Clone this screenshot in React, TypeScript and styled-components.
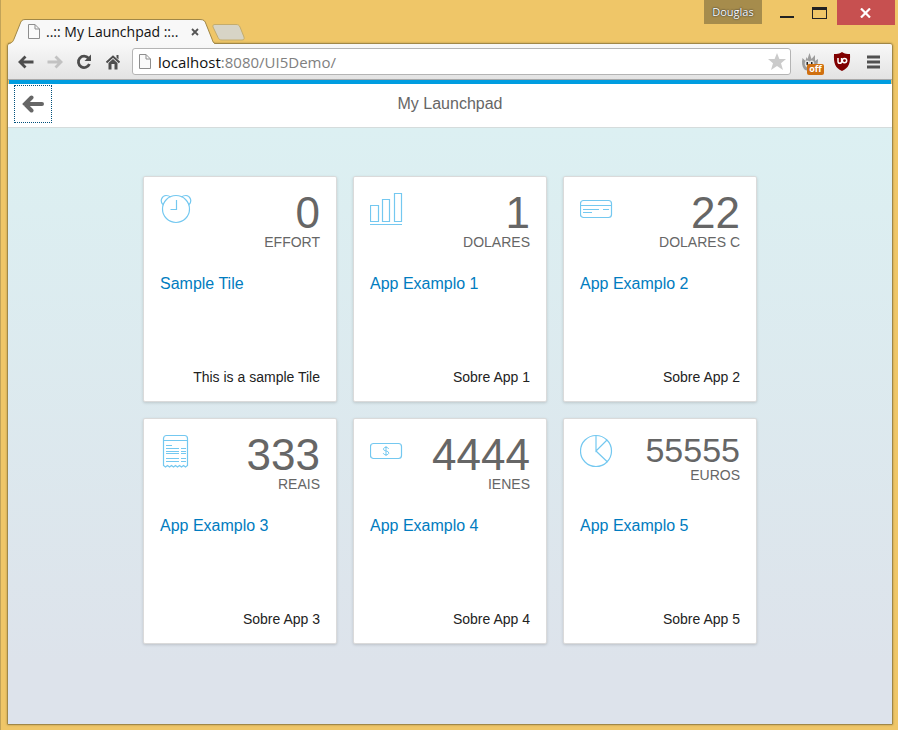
import React from "react";
import styled, { createGlobalStyle, css } from "styled-components";

const GlobalStyle = createGlobalStyle`
  * { box-sizing: border-box; }
  body { margin: 0; background: #efc668; font-family: "Liberation Sans", Arial, sans-serif; }
  button, input { font: inherit; }
  svg { display: block; flex: none; }
`;

const Desktop = styled.div`
  min-height: 100vh;
  display: flex;
  flex-direction: column;
  padding: 0 5px 5px 6px;
  border-left: 1px solid #c2a358;
  background: #efc668;
`;

const TitleBar = styled.header`
  display: flex;
  justify-content: space-between;
  height: 43px;
  margin-right: -2px;
`;

const TabStrip = styled.div`
  display: flex;
  align-items: flex-end;
`;

const Tab = styled.div`
  position: relative;
  z-index: 1;
  display: flex;
  align-items: center;
  width: 208px;
  height: 25px;
  margin-bottom: -1px;
  padding: 0 16px 0 21px;
`;

const TabShape = styled.svg`
  position: absolute;
  inset: 0;
`;

const TabTitle = styled.span`
  position: relative;
  flex: 1;
  margin-left: 6px;
  font: 14px/20px "Open Sans", "Noto Sans", sans-serif;
  color: #111;
  white-space: nowrap;
`;

const PlainButton = styled.button`
  position: relative;
  display: flex;
  align-items: center;
  justify-content: center;
  flex: none;
  padding: 0;
  border: 0;
  background: none;
  cursor: pointer;
`;

const NewTabButton = styled(PlainButton)`
  margin: 0 0 2px -3px;
`;

const WindowControls = styled.div`
  display: flex;
  align-items: flex-start;
`;

const ProfileButton = styled(PlainButton)`
  height: 24px;
  width: 58px;
  background: #a68c4c;
  color: #fff;
  font: 11px/24px "Open Sans", "Noto Sans", sans-serif;
  text-shadow: 0 0 2px #333, 0 0 1px #333;
`;

const CaptionButton = styled(PlainButton)<{ $wide?: boolean }>`
  width: ${(p) => (p.$wide ? 58 : 33)}px;
  height: 25px;
  ${(p) => p.$wide && css`background: #c75050;`}
`;

const CaptionGroup = styled.div`
  display: flex;
  margin: 0 1px 0 8px;
`;

const BrowserWindow = styled.div`
  flex: 1;
  display: flex;
  flex-direction: column;
  border: 1px solid #a08747;
  border-radius: 3px 3px 1px 1px;
  box-shadow: 0 0 2px #a08747;
  overflow: hidden;
`;

const Toolbar = styled.nav`
  display: flex;
  align-items: center;
  height: 36px;
  padding: 0 10px 0 9px;
  background: linear-gradient(#f8f8f8, #e3e3e3);
  border-bottom: 1px solid #a9a9a9;
`;

const NavButtons = styled.div`
  display: flex;
  gap: 11px;
`;

const AddressBar = styled.div`
  flex: 1;
  display: flex;
  align-items: center;
  gap: 7px;
  height: 27px;
  margin: 0 9px 0 10px;
  padding: 0 4px 0 6px;
  border: 1px solid #b4b4b4;
  border-radius: 3px;
  background: #fff;
`;

const Address = styled.div`
  flex: 1;
  font: 15px/24px "Open Sans", "Noto Sans", sans-serif;
  color: #808080;
`;

const Host = styled.span`
  color: #111;
`;

const Extensions = styled.div`
  display: flex;
  align-items: center;
  gap: 13px;
`;

const OffBadge = styled.span`
  position: absolute;
  right: -4px;
  bottom: -3px;
  width: 17px;
  height: 11px;
  border-radius: 2px;
  background: #d07010;
  color: #fff;
  font: bold 9px/10px "Open Sans", sans-serif;
  text-align: center;
`;

const ShellAccent = styled.div`
  height: 4px;
  margin: 0 1px;
  background: #009de0;
`;

const ShellHeader = styled.header`
  display: grid;
  grid-template-columns: 1fr auto 1fr;
  align-items: center;
  height: 44px;
  padding: 0 6px 4px;
  border-bottom: 1px solid #d5dcdc;
  background: #fff;
`;

const ShellTitle = styled.h1`
  margin: 0;
  font-size: 16px;
  line-height: 20px;
  font-weight: normal;
  color: #666;
`;

const BackButton = styled(PlainButton)`
  width: 38px;
  height: 38px;
  border: 1px dotted #00507c;
`;

const Launchpad = styled.main`
  flex: 1;
  display: flex;
  justify-content: center;
  align-items: flex-start;
  padding: 48px 16px;
  background: linear-gradient(#dcf0f2, #dde3eb 90%);
`;

const TileGrid = styled.div`
  display: grid;
  grid-template-columns: repeat(3, 194px);
  gap: 16px;
`;

const TileLink = styled.a`
  display: flex;
  flex-direction: column;
  min-height: 226px;
  padding: 15px 16px;
  border: 1px solid #dadada;
  border-radius: 2px;
  background: #fff;
  box-shadow: 0 1px 3px rgba(0, 0, 0, 0.15);
  text-decoration: none;
`;

const TileTop = styled.div`
  display: flex;
  justify-content: space-between;
  height: 80px;
`;

const Measure = styled.div`
  text-align: right;
  color: #666;
`;

const Figure = styled.div<{ $small?: boolean }>`
  font-family: "Liberation Sans Narrow", "Arial Narrow", "Liberation Sans", sans-serif;
  font-size: ${(p) => (p.$small ? 34 : 44)}px;
  line-height: ${(p) => (p.$small ? 33 : 42)}px;
`;

const Unit = styled.div`
  font-size: 14px;
  line-height: 16px;
`;

const TileTitle = styled.h2`
  margin: 0;
  font-size: 16px;
  line-height: 24px;
  font-weight: normal;
  color: #007cc0;
`;

const Info = styled.div`
  margin-top: auto;
  font-size: 14px;
  line-height: 18px;
  text-align: right;
  color: #222;
`;

const TileSvg = ({ children }: { children: React.ReactNode }) => (
  <svg width="33" height="34" viewBox="0 0 33 34" fill="none" stroke="#74c8f0" strokeWidth="1.2" aria-hidden="true">
    {children}
  </svg>
);

const icons = {
  clock: (
    <TileSvg>
      <circle cx="16" cy="17" r="13.5" />
      <path d="M16.5 8v9.500h-6M2.800 12.500C-.5 9 2 3.500 6 3.500c2 0 3.500.600 4.500 1.500M29.200 12.500C32.500 9 30 3.500 26 3.500c-2 0-3.500.600-4.500 1.500" />
    </TileSvg>
  ),
  bars: (
    <TileSvg>
      <path d="M.5 13.500h8v16h-8zM12.500 7.500h7v22h-7zM24.500 1.500h7v28h-7zM0 32.500h32" />
    </TileSvg>
  ),
  card: (
    <TileSvg>
      <rect x=".5" y="8.500" width="31" height="17" rx="3" />
      <path d="M.5 13.500h31M3 17.500h16M23 17.500h6M3 20.500h9" />
    </TileSvg>
  ),
  receipt: (
    <TileSvg>
      <path d="M3.500 6.500V4.500a3 3 0 0 1 3-3h18a3 3 0 0 1 3 3v2M3.500 6.500h24M3.500 6.500v25l2 1.500 2-1.500 2 1.500 2-1.500 2 1.500 2-1.500 2 1.500 2-1.500 2 1.500 2-1.500 2 1.500 2-1.500V6.500" />
      <path d="M6 11.500h6M6 14.500h13M21 14.500h5M6 17.500h13M21 17.500h5M6 19.500h13M21 19.500h5M6 24.500h13M21 24.500h5M6 27.500h13M21 27.500h5" />
    </TileSvg>
  ),
  money: (
    <TileSvg>
      <rect x=".5" y="9.500" width="31" height="15" rx="3" />
      <path d="M18.700 15c-.3-1-1.300-1.600-2.700-1.600s-2.600.6-2.600 1.700c0 2.500 5.400 1.200 5.400 3.900 0 1.100-1.200 1.800-2.700 1.800s-2.700-.7-2.900-1.800M16 12v10" strokeWidth="1" />
    </TileSvg>
  ),
  pie: (
    <TileSvg>
      <circle cx="16" cy="17" r="15.500" />
      <path d="M16 1.500V17L27 6M16 17l11.500 11" />
    </TileSvg>
  ),
};

type TileData = { icon: keyof typeof icons; value: string; unit: string; title: string; info: string };

const tiles: TileData[] = [
  { icon: "clock", value: "0", unit: "EFFORT", title: "Sample Tile", info: "This is a sample Tile" },
  { icon: "bars", value: "1", unit: "DOLARES", title: "App Examplo 1", info: "Sobre App 1" },
  { icon: "card", value: "22", unit: "DOLARES C", title: "App Examplo 2", info: "Sobre App 2" },
  { icon: "receipt", value: "333", unit: "REAIS", title: "App Examplo 3", info: "Sobre App 3" },
  { icon: "money", value: "4444", unit: "IENES", title: "App Examplo 4", info: "Sobre App 4" },
  { icon: "pie", value: "55555", unit: "EUROS", title: "App Examplo 5", info: "Sobre App 5" },
];

const Tile = ({ icon, value, unit, title, info }: TileData) => (
  <TileLink href="#">
    <TileTop>
      {icons[icon]}
      <Measure>
        <Figure $small={value.length > 4}>{value}</Figure>
        <Unit>{unit}</Unit>
      </Measure>
    </TileTop>
    <TileTitle>{title}</TileTitle>
    <Info>{info}</Info>
  </TileLink>
);

const PageSvg = styled.svg`
  position: relative;
`;

const PageIcon = () => (
  <PageSvg width="12" height="15" viewBox="0 0 12 15" fill="#fafafa" stroke="#8e8e8e" aria-hidden="true">
    <path d="M.5.5h6.500l4.500 4.500v9.500H.5zM7 .5V5h4.500" />
  </PageSvg>
);

const Arrow = ({ color, flip }: { color: string; flip?: boolean }) => (
  <svg width="18" height="18" viewBox="0 0 18 18" fill="none" stroke={color} strokeWidth="2.800" aria-hidden="true">
    <path d={flip ? "M1.500 9h13M9.500 3.500 15 9l-5.500 5.500" : "M16.500 9h-13M8.500 3.500 3 9l5.500 5.500"} />
  </svg>
);

export default function App() {
  return (
    <>
      <GlobalStyle />
      <Desktop>
        <TitleBar>
          <TabStrip>
            <Tab>
              <TabShape width="208" height="25" viewBox="0 0 208 25" aria-hidden="true">
                <path d="M2 25c3-1 4-2 5-5l6-15c1-3 2-4.500 5-4.500h175c4 0 5 1.500 6 4.500l6 15c1 3 1.500 4 3 5z" fill="#f8f8f8" />
                <path d="M1 24.500c4-.5 5-2 6-4.500l6-15c1-3 2-4.500 5-4.500h175c4 0 5 1.500 6 4.500l6 15c1 3 1.500 4 3 4.500" fill="none" stroke="#a08747" />
              </TabShape>
              <PageIcon />
              <TabTitle>..:: My Launchpad ::..</TabTitle>
              <PlainButton aria-label="Close tab">
                <svg width="8" height="8" viewBox="0 0 8 8" stroke="#555" strokeWidth="1.800" aria-hidden="true">
                  <path d="m1 1 6 6M7 1 1 7" />
                </svg>
              </PlainButton>
            </Tab>
            <NewTabButton aria-label="New tab">
              <svg width="33" height="17" viewBox="0 0 33 17" aria-hidden="true">
                <path d="M3 .5h21c2 0 3 .5 4 2.500l4 10c.5 2 0 3-2 3H10c-2 0-3-.5-4-2.500L1 3C.5 1.500 1 .5 3 .5z" fill="#d7d4c6" stroke="#c4ac6c" />
              </svg>
            </NewTabButton>
          </TabStrip>
          <WindowControls>
            <ProfileButton>Douglas</ProfileButton>
            <CaptionGroup>
              <CaptionButton aria-label="Minimize">
                <svg width="14" height="14" viewBox="0 0 14 14" aria-hidden="true"><path d="M0 10h14v2H0z" fill="#222" /></svg>
              </CaptionButton>
              <CaptionButton aria-label="Maximize">
                <svg width="15" height="12" viewBox="0 0 15 12" aria-hidden="true"><path d="M0 0h15v12H0zM1 3v8h13V3z" fillRule="evenodd" fill="#222" /></svg>
              </CaptionButton>
            </CaptionGroup>
            <CaptionButton $wide aria-label="Close">
              <svg width="12" height="10" viewBox="0 0 12 10" stroke="#fff" strokeWidth="2.200" aria-hidden="true"><path d="m1 .5 9 9M10 .5l-9 9" /></svg>
            </CaptionButton>
          </WindowControls>
        </TitleBar>

        <BrowserWindow>
          <Toolbar>
            <NavButtons>
              <PlainButton aria-label="Back"><Arrow color="#4d4d4d" /></PlainButton>
              <PlainButton aria-label="Forward"><Arrow color="#c2c2c2" flip /></PlainButton>
              <PlainButton aria-label="Reload">
                <svg width="18" height="18" viewBox="0 0 18 18" aria-hidden="true">
                  <path d="M13.500 5.200A5.700 5.700 0 1 0 14.400 11" fill="none" stroke="#4d4d4d" strokeWidth="2.800" />
                  <path d="M16 1.500V8H9.500z" fill="#4d4d4d" />
                </svg>
              </PlainButton>
              <PlainButton aria-label="Home">
                <svg width="18" height="18" viewBox="0 0 18 18" aria-hidden="true">
                  <path d="m2.500 9.500 6.500-6 6.500 6" fill="none" stroke="#4d4d4d" strokeWidth="2" />
                  <path d="M12.500 2h2v4.500l-2-2zM4.500 10 9 6l4.500 4v6.500h-3V11h-3v5.500h-3z" fill="#4d4d4d" />
                </svg>
              </PlainButton>
            </NavButtons>
            <AddressBar>
              <PageIcon />
              <Address><Host>localhost</Host>:8080/UI5Demo/</Address>
              <PlainButton aria-label="Bookmark this page">
                <svg width="18" height="17" viewBox="0 0 18 17" aria-hidden="true"><path d="m9 0 2.400 6H18l-5 4.300 2 6.700-6-4-6 4 2-6.700L0 6h6.600z" fill="#cbcbcb" /></svg>
              </PlainButton>
            </AddressBar>
            <Extensions>
              <PlainButton aria-label="Extension off">
                <svg width="20" height="20" viewBox="0 0 20 20" aria-hidden="true">
                  <path d="M4 17C2 14 1.500 11 2.500 6l3 3 1-4 1 2L9.500 1l2 6 3.500-4v6l3-2c0 5-1 8-4 10-4 2-8 2-10 0z" fill="#9c9c9c" />
                  <path d="M5 10c1-2 3-2 4.500-.5C11 8 13 8 14 10c1 3-1 6-4.500 6S4 13 5 10z" fill="#e4e4e4" />
                  <path d="M6.500 10H8v3H6.500zM11 10h1.500v3H11z" fill="#222" />
                </svg>
                <OffBadge>off</OffBadge>
              </PlainButton>
              <PlainButton aria-label="uBlock">
                <svg width="18" height="19" viewBox="0 0 18 19" aria-hidden="true">
                  <path d="M9 0c3 2 5 2 8 2 .5 9-1 14-8 17C2 16 .5 11 1 2c3 0 5 0 8-2z" fill="#800000" />
                  <path d="M5 6v3.500a1.800 1.800 0 0 0 3.600 0V6" fill="none" stroke="#fff" strokeWidth="1.500" />
                  <circle cx="11.500" cy="8.600" r="2.200" fill="none" stroke="#fff" strokeWidth="1.500" />
                </svg>
              </PlainButton>
              <PlainButton aria-label="Menu">
                <svg width="18" height="14" viewBox="0 0 18 14" aria-hidden="true"><path d="M3 2h13M3 7h13M3 12h13" stroke="#505050" strokeWidth="2.800" /></svg>
              </PlainButton>
            </Extensions>
          </Toolbar>
          <ShellAccent />
          <ShellHeader>
            <BackButton aria-label="Back to previous page">
              <svg width="22" height="18" viewBox="0 0 22 18" fill="none" stroke="#666" strokeWidth="4" aria-hidden="true">
                <path d="M3 9h17M9.500 2.500 3 9l6.500 6.500" strokeLinecap="round" />
              </svg>
            </BackButton>
            <ShellTitle>My Launchpad</ShellTitle>
          </ShellHeader>
          <Launchpad>
            <TileGrid>
              {tiles.map((tile) => <Tile key={tile.title} {...tile} />)}
            </TileGrid>
          </Launchpad>
        </BrowserWindow>
      </Desktop>
    </>
  );
}
